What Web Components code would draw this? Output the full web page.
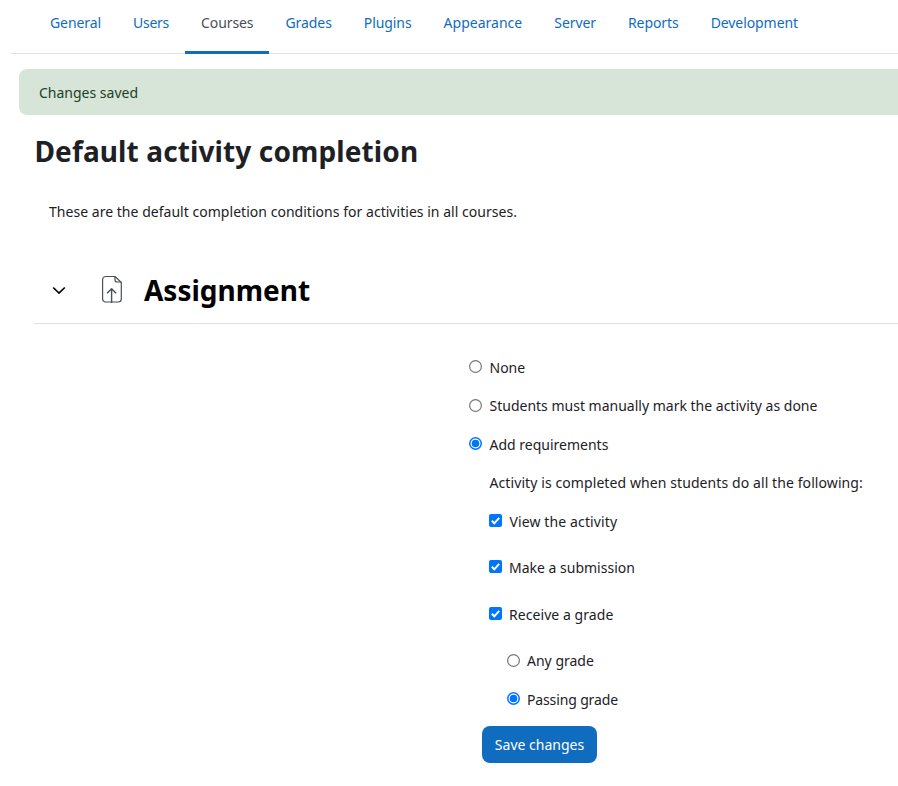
<!DOCTYPE html>
<html lang="en"><head><meta charset="utf-8"><title>Default activity completion</title>
<style>
html,body{margin:0;padding:0;background:#fff;overflow:hidden;width:898px;height:786px}
body{font-family:"Noto Sans","Open Sans","Liberation Sans",sans-serif;font-size:14px;color:#1d2125}
</style></head><body>
<admin-page>
  <tab-bar>
    <nav-tab>General</nav-tab><nav-tab style="letter-spacing:-.28px">Users</nav-tab><nav-tab active>Courses</nav-tab><nav-tab>Grades</nav-tab><nav-tab>Plugins</nav-tab><nav-tab style="letter-spacing:.02px">Appearance</nav-tab><nav-tab>Server</nav-tab><nav-tab>Reports</nav-tab><nav-tab>Development</nav-tab>
  </tab-bar>
  <alert-box>Changes saved</alert-box>
  <page-title>Default activity completion</page-title>
  <intro-text>These are the default completion conditions for activities in all courses.</intro-text>
  <section-head>Assignment</section-head>
  <completion-form>
    <opt-row type="radio" h="38">None</opt-row>
    <opt-row type="radio" h="39">Students must manually mark the activity as done</opt-row>
    <opt-row type="radio" h="39" checked>Add requirements</opt-row>
    <note-row>Activity is completed when students do all the following:</note-row>
    <opt-row type="check" indent="20" h="39" mb="7" checked style="letter-spacing:.12px">View the activity</opt-row>
    <opt-row type="check" indent="20" h="39" mb="8" checked style="--g:7px">Make a submission</opt-row>
    <opt-row type="check" indent="20" h="39" mb="7" checked style="letter-spacing:.06px;--g:7px">Receive a grade</opt-row>
    <opt-row type="radio" indent="38" h="39" style="--g:7px">Any grade</opt-row>
    <opt-row type="radio" indent="38" h="39" checked style="letter-spacing:-.14px;--g:7px">Passing grade</opt-row>
    <save-button>Save changes</save-button>
  </completion-form>
</admin-page>
<script>
function def(name, css, html){
  customElements.define(name, class extends HTMLElement{
    constructor(){super();const r=this.attachShadow({mode:'open'});r.innerHTML='<style>'+css+'</style>'+(typeof html==='function'?html(this):html);}
  });
}
def('admin-page',':host{display:block;width:898px;height:786px;overflow:hidden}','<slot></slot>');
def('tab-bar',':host{display:flex;margin-left:11px;padding-left:23px;height:54px;box-sizing:border-box;border-bottom:1px solid #dee2e6}','<slot></slot>');
def('nav-tab',':host{display:flex;align-items:center;height:54px;box-sizing:border-box;padding:0 16px 10px;color:#0f6cbf;font-size:14px;letter-spacing:-.08px;white-space:nowrap}:host([active]){color:#495057;border-bottom:3px solid #0f6cbf;padding-bottom:7px}','<slot></slot>');
def('alert-box',':host{display:flex;align-items:center;margin:15px 0 0 19px;width:900px;height:46px;box-sizing:border-box;padding:0 20px;background:#d7e4d8;border-radius:8px 0 0 8px;color:#1c3f26;font-size:14px}','<slot></slot>');
def('page-title',':host{display:block;margin:16px 0 0 34.5px;font-size:28px;line-height:40px;font-weight:700;letter-spacing:.12px;color:#1d2125}','<slot></slot>');
def('intro-text',':host{display:block;margin:30px 0 0 49px;font-size:14px;line-height:22px;letter-spacing:.03px}','<slot></slot>');
def('section-head',':host{display:flex;align-items:center;margin:36px 0 0 34px;height:65px;box-sizing:border-box;padding-bottom:2px;border-bottom:1px solid #dee2e6;font-size:28px;font-weight:700;color:#000}.c{width:16px;height:16px;margin-left:16.5px}.f{width:24px;height:30px;margin:0 0 4px 33.9px}.t{margin-left:19.6px}',
'<svg class="c" viewBox="0 0 16 16" fill="none" stroke="#000" stroke-width="1.700"><path d="M2.200 5.500 8 11l5.800-5.500"/></svg><svg class="f" viewBox="0 0 24 30" fill="none" stroke="#495057" stroke-width="1.200" stroke-linejoin="round"><path d="M5.600 3.500H15l6.300 6V26a3 3 0 0 1-3 3H5.600a3 3 0 0 1-3-3V6.500a3 3 0 0 1 3-3z"/><path d="M15 3.500V7a2 2 0 0 0 2 2h4.300"/><path d="M11.600 30V15.800M7.100 20.300l4.500-4.500 4.500 4.500" stroke-width="1.400"/></svg><span class="t"><slot></slot></span>');
def('completion-form',':host{display:block;margin:24px 0 0 469px;width:429px}','<slot></slot>');
def('opt-row',':host{display:flex;align-items:center;font-size:14px;white-space:nowrap}.m{flex:none;box-sizing:border-box;width:13px;height:13px;margin:-1px var(--g,7.5px) 0 0}:host([checked]) .m{margin-top:-2px}',
e=>{
  const ind=+e.getAttribute('indent')||0, h=+e.getAttribute('h')||39, mb=+e.getAttribute('mb')||0, on=e.hasAttribute('checked');
  let m;
  if(e.getAttribute('type')==='check'){
    m='<svg class="m" viewBox="0 0 13 13"><rect width="13" height="13" rx="2" fill="#0075ff"/><path d="M2.800 6.800 5.300 9.300 10.200 3.800" fill="none" stroke="#fff" stroke-width="2"/></svg>';
  }else{
    m=on?'<svg class="m" viewBox="0 0 13 13"><circle cx="6.500" cy="6.500" r="5.750" fill="#fff" stroke="#0075ff" stroke-width="1.500"/><circle cx="6.500" cy="6.500" r="3.800" fill="#0075ff"/></svg>'
        :'<svg class="m" viewBox="0 0 13 13"><circle cx="6.500" cy="6.500" r="5.900" fill="#fff" stroke="#767676" stroke-width="1.200"/></svg>';
  }
  return '<style>:host{height:'+h+'px;padding-left:'+ind+'px;margin-bottom:'+mb+'px}</style>'+m+'<span><slot></slot></span>';
});
def('note-row',':host{display:flex;align-items:center;height:38px;box-sizing:border-box;padding:0 0 2px 20.500px;font-size:14px;letter-spacing:.09px;white-space:nowrap}','<slot></slot>');
def('save-button',':host{display:inline-flex;align-items:center;justify-content:center;box-sizing:border-box;width:115px;height:37px;margin:7px 0 0 13px;background:#0f6cbf;color:#fff;border-radius:8px;font-size:14px}','<slot></slot>');
</script>
</body></html>
